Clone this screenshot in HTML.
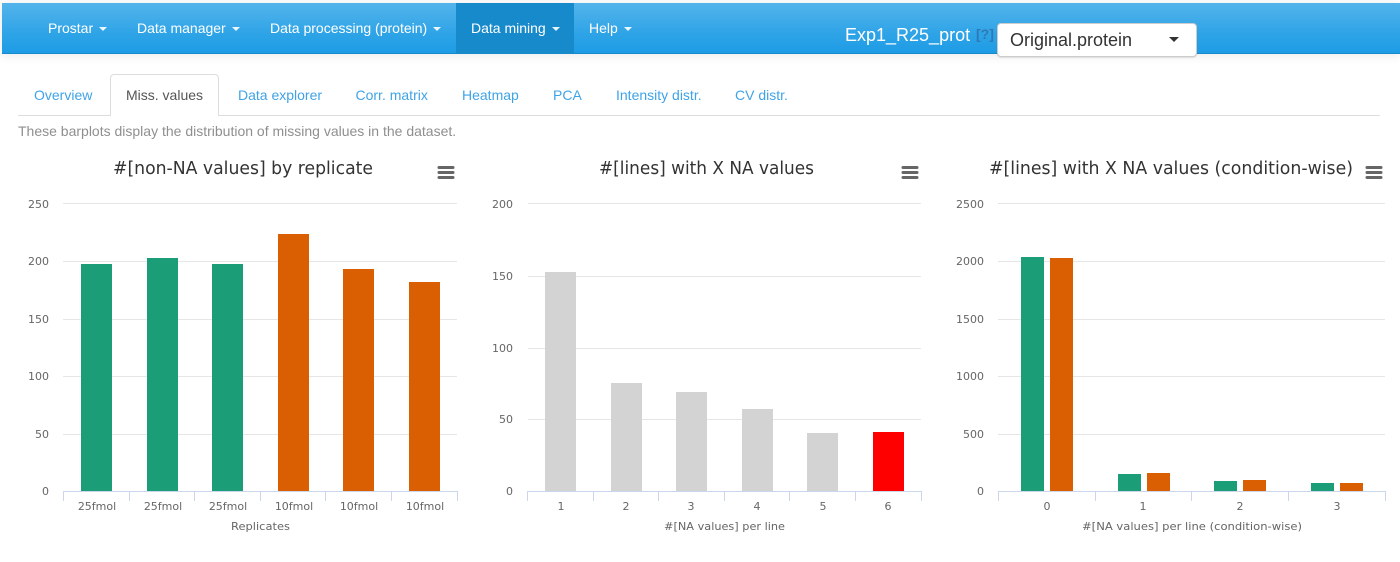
<!DOCTYPE html>
<html><head><meta charset="utf-8"><style>
*{box-sizing:border-box}
html,body{margin:0;padding:0;width:1400px;height:562px;overflow:hidden;background:#fff;font-family:"Liberation Sans",sans-serif}
.nav{position:absolute;left:2px;top:3px;width:1398px;height:51px;background:linear-gradient(#54b4eb,#2fa4e7 60%,#1d9ce5);border-bottom:1px solid #178acc;box-shadow:0 1px 10px rgba(0,0,0,.1)}
.n{position:absolute;top:28px;transform:translateY(-50%);font-size:14px;color:#fff;white-space:nowrap;line-height:20px}
.n i{display:inline-block;width:0;height:0;border-left:4px solid transparent;border-right:4px solid transparent;border-top:4px solid #fff;margin-left:6px;vertical-align:middle;opacity:.9}
.act{position:absolute;left:456px;top:3px;width:118px;height:50px;background:#178acc}
.t{position:absolute;top:95px;transform:translateY(-50%);font-size:14px;color:#3fa3e6;line-height:20px;white-space:nowrap}
.tabline{position:absolute;left:18px;top:115px;width:1362px;height:1px;background:#ddd}
.tab{position:absolute;left:110px;top:74px;width:109px;height:42px;background:#fff;border:1px solid #ddd;border-bottom:0;border-radius:4px 4px 0 0}
.help{position:absolute;left:18px;top:131px;transform:translateY(-50%);font-size:14px;color:#8f8f8f;line-height:20px;white-space:nowrap}
.sel{position:absolute;left:997px;top:23px;width:200px;height:34px;background:#fff;border:1px solid #ccc;border-radius:4px;box-shadow:0 1px 1px rgba(0,0,0,.1)}
.sel span{position:absolute;left:12px;top:6px;font-size:18px;line-height:21px;color:#333}
.sel i{position:absolute;left:171px;top:13px;width:0;height:0;border-left:5px solid transparent;border-right:5px solid transparent;border-top:5px solid #333}
svg{position:absolute;left:0;top:0}
svg text{font-family:"DejaVu Sans",sans-serif}
.ti{font-size:18px;fill:#333}
.l{font-size:11px;fill:#666}
.a{font-size:11px;fill:#666}
</style></head><body>
<div class="nav"></div>
<div class="act"></div>
<div class="n" style="left:48px">Prostar<i></i></div>
<div class="n" style="left:137px">Data manager<i></i></div>
<div class="n" style="left:270px">Data processing (protein)<i></i></div>
<div class="n" style="left:471px">Data mining<i></i></div>
<div class="n" style="left:589px">Help<i></i></div>
<div style="position:absolute;left:845px;top:35px;transform:translateY(-50%);font-size:18px;color:#fff;line-height:20px;white-space:nowrap">Exp1_R25_prot</div>
<div style="position:absolute;left:976px;top:34px;transform:translateY(-50%);font-size:14px;font-weight:bold;color:#2f78b4;line-height:20px">[?]</div>
<div class="sel"><span>Original.protein</span><i></i></div>
<div class="tabline"></div><div class="tab"></div>
<div class="t" style="left:34px">Overview</div>
<div class="t" style="left:126px;color:#555">Miss. values</div>
<div class="t" style="left:238px">Data explorer</div>
<div class="t" style="left:355.5px">Corr. matrix</div>
<div class="t" style="left:462px">Heatmap</div>
<div class="t" style="left:553px">PCA</div>
<div class="t" style="left:616px">Intensity distr.</div>
<div class="t" style="left:735px">CV distr.</div>
<div class="help">These barplots display the distribution of missing values in the dataset.</div>
<svg width="1400" height="562" viewBox="0 0 1400 562">
<g stroke="#e6e6e6" stroke-width="1">
<path d="M63 203.5H457M63 261.5H457M63 319.5H457M63 376.5H457M63 434.5H457"/>
<path d="M528 203.5H921M528 276.5H921M528 348.5H921M528 419.5H921"/>
<path d="M998 203.5H1385M998 261.5H1385M998 319.5H1385M998 376.5H1385M998 434.5H1385"/>
</g>
<g fill="#1b9e77"><rect x="81" y="264" width="31" height="227"/><rect x="147" y="258" width="31" height="233"/><rect x="212" y="264" width="31" height="227"/>
<rect x="1021" y="257" width="23" height="234"/><rect x="1118" y="474" width="23" height="17"/><rect x="1214" y="481" width="23" height="10"/><rect x="1311" y="483" width="23" height="8"/></g>
<g fill="#d95f02"><rect x="278" y="234" width="31" height="257"/><rect x="343" y="269" width="31" height="222"/><rect x="409" y="282" width="31" height="209"/>
<rect x="1050" y="258" width="23" height="233"/><rect x="1147" y="473" width="23" height="18"/><rect x="1243" y="480" width="23" height="11"/><rect x="1340" y="483" width="23" height="8"/></g>
<g fill="#d3d3d3"><rect x="545" y="272" width="31" height="219"/><rect x="611" y="383" width="31" height="108"/><rect x="676" y="392" width="31" height="99"/><rect x="742" y="409" width="31" height="82"/><rect x="807" y="433" width="31" height="58"/></g>
<rect x="873" y="432" width="31" height="59" fill="#f00"/>
<g stroke="#ccd6eb" stroke-width="1" fill="none">
<path d="M63 491.5H457M63.5 491V501M129.5 491V501M194.5 491V501M260.5 491V501M325.5 491V501M391.5 491V501M457.5 491V501"/>
<path d="M527 491.5H921M527.5 491V501M593.5 491V501M658.5 491V501M724.5 491V501M789.5 491V501M855.5 491V501M921.5 491V501"/>
<path d="M998 491.5H1385M998.5 491V501M1095.5 491V501M1191.5 491V501M1288.5 491V501M1385.5 491V501"/>
</g>
<g fill="none" stroke="#666" stroke-width="3" stroke-linecap="round"><path d="M439 167.5H453M439 172.5H453M439 177.5H453"/><path d="M903 167.5H917M903 172.5H917M903 177.5H917"/><path d="M1367 167.5H1381M1367 172.5H1381M1367 177.5H1381"/></g>
<text class="ti" x="113" y="174" textLength="260" lengthAdjust="spacingAndGlyphs">#[non-NA values] by replicate</text>
<text class="ti" x="599" y="174" textLength="215" lengthAdjust="spacingAndGlyphs">#[lines] with X NA values</text>
<text class="ti" x="989" y="174" textLength="364" lengthAdjust="spacingAndGlyphs">#[lines] with X NA values (condition-wise)</text>
<g text-anchor="end">
<text class="l" x="49" y="208">250</text><text class="l" x="49" y="265">200</text><text class="l" x="49" y="323">150</text><text class="l" x="49" y="380">100</text><text class="l" x="49" y="438">50</text><text class="l" x="49" y="495">0</text>
<text class="l" x="513" y="208">200</text><text class="l" x="513" y="280">150</text><text class="l" x="513" y="352">100</text><text class="l" x="513" y="423">50</text><text class="l" x="513" y="495">0</text>
<text class="l" x="984" y="208">2500</text><text class="l" x="984" y="265">2000</text><text class="l" x="984" y="323">1500</text><text class="l" x="984" y="380">1000</text><text class="l" x="984" y="438">500</text><text class="l" x="984" y="495">0</text>
</g>
<g text-anchor="middle">
<text class="a" x="97" y="510">25fmol</text><text class="a" x="163" y="510">25fmol</text><text class="a" x="228" y="510">25fmol</text><text class="a" x="294" y="510">10fmol</text><text class="a" x="359" y="510">10fmol</text><text class="a" x="425" y="510">10fmol</text>
<text class="a" x="561" y="510">1</text><text class="a" x="626" y="510">2</text><text class="a" x="691" y="510">3</text><text class="a" x="757" y="510">4</text><text class="a" x="823" y="510">5</text><text class="a" x="888" y="510">6</text>
<text class="a" x="1047" y="510">0</text><text class="a" x="1143" y="510">1</text><text class="a" x="1240" y="510">2</text><text class="a" x="1337" y="510">3</text>
</g>
<text class="a" x="231" y="530" textLength="59" lengthAdjust="spacingAndGlyphs">Replicates</text>
<text class="a" x="664" y="530" textLength="121" lengthAdjust="spacingAndGlyphs">#[NA values] per line</text>
<text class="a" x="1082" y="530" textLength="220" lengthAdjust="spacingAndGlyphs">#[NA values] per line (condition-wise)</text>
</svg>
</body></html>
